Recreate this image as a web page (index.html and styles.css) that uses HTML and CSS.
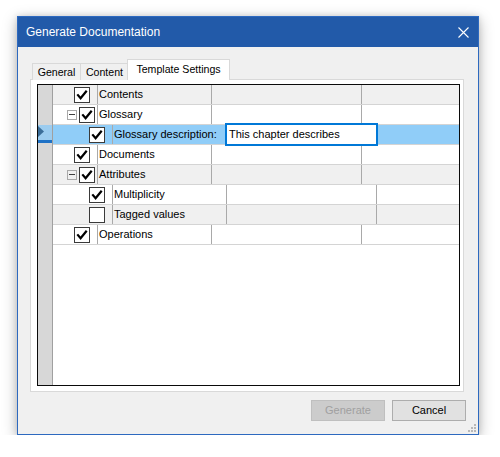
FILE: index.html
```html
<!DOCTYPE html>
<html>
<head>
<meta charset="utf-8">
<title>Generate Documentation</title>
<link rel="stylesheet" href="styles.css">
</head>
<body>
<div class="window">
  <div class="titlebar">
    <span class="title">Generate Documentation</span>
    <svg class="close" width="11" height="11" viewBox="0 0 11 11"><path d="M0.5 0.5L10.5 10.5M10.5 0.5L0.5 10.5" stroke="#ffffff" stroke-width="1.1" fill="none"/></svg>
  </div>
  <div class="content">
    <div class="tabs">
      <div class="tab">General</div>
      <div class="tab second">Content</div>
      <div class="tab active">Template Settings</div>
    </div>
    <div class="panel">
      <div class="grid">
        <div class="row grey">
          <div class="rh"></div>
          <div class="cells">
            <div class="lead l1"><span class="cb c-plain"><svg viewBox="0 0 14 14"><path d="M3 7.2L5.6 10.2L11 3.6" /></svg></span></div>
            <div class="name">Contents</div>
            <div class="val"></div>
            <div class="rest"></div>
          </div>
        </div>
        <div class="row">
          <div class="rh"></div>
          <div class="cells">
            <div class="lead l1"><span class="exp"><span class="minus"></span></span><span class="cb c-exp"><svg viewBox="0 0 14 14"><path d="M3 7.2L5.6 10.2L11 3.6" /></svg></span></div>
            <div class="name">Glossary</div>
            <div class="val"></div>
            <div class="rest"></div>
          </div>
        </div>
        <div class="row selected">
          <div class="rh sel"><svg width="7" height="11" viewBox="0 0 7 11"><polygon points="0,0 6,5.5 0,11" fill="#3b6d98"/></svg></div>
          <div class="cells">
            <div class="lead l2"><span class="cb c-l2"><svg viewBox="0 0 14 14"><path d="M3 7.2L5.6 10.2L11 3.6" /></svg></span></div>
            <div class="name">Glossary description:</div>
            <div class="val"><div class="editor">This chapter describes</div></div>
            <div class="rest"></div>
          </div>
        </div>
        <div class="row">
          <div class="rh"></div>
          <div class="cells">
            <div class="lead l1"><span class="cb c-plain"><svg viewBox="0 0 14 14"><path d="M3 7.2L5.6 10.2L11 3.6" /></svg></span></div>
            <div class="name">Documents</div>
            <div class="val"></div>
            <div class="rest"></div>
          </div>
        </div>
        <div class="row grey">
          <div class="rh"></div>
          <div class="cells">
            <div class="lead l1"><span class="exp"><span class="minus"></span></span><span class="cb c-exp"><svg viewBox="0 0 14 14"><path d="M3 7.2L5.6 10.2L11 3.6" /></svg></span></div>
            <div class="name">Attributes</div>
            <div class="val"></div>
            <div class="rest"></div>
          </div>
        </div>
        <div class="row">
          <div class="rh"></div>
          <div class="cells">
            <div class="lead l2"><span class="cb c-l2"><svg viewBox="0 0 14 14"><path d="M3 7.2L5.6 10.2L11 3.6" /></svg></span></div>
            <div class="name">Multiplicity</div>
            <div class="val"></div>
            <div class="rest"></div>
          </div>
        </div>
        <div class="row grey">
          <div class="rh"></div>
          <div class="cells">
            <div class="lead l2"><span class="cb c-l2"></span></div>
            <div class="name">Tagged values</div>
            <div class="val"></div>
            <div class="rest"></div>
          </div>
        </div>
        <div class="row">
          <div class="rh"></div>
          <div class="cells">
            <div class="lead l1"><span class="cb c-plain"><svg viewBox="0 0 14 14"><path d="M3 7.2L5.6 10.2L11 3.6" /></svg></span></div>
            <div class="name">Operations</div>
            <div class="val"></div>
            <div class="rest"></div>
          </div>
        </div>
        <div class="filler">
          <div class="rh"></div>
          <div class="blank"></div>
        </div>
      </div>
    </div>
    <div class="buttons">
      <div class="btn disabled">Generate</div>
      <div class="btn">Cancel</div>
    </div>
  </div>
  <svg class="grip" width="8" height="8" viewBox="0 0 8 8">
    <rect x="6" y="0" width="2" height="2"/>
    <rect x="3" y="3" width="2" height="2"/>
    <rect x="6" y="3" width="2" height="2"/>
    <rect x="0" y="6" width="2" height="2"/>
    <rect x="3" y="6" width="2" height="2"/>
    <rect x="6" y="6" width="2" height="2"/>
  </svg>
</div>
</body>
</html>
```
FILE: styles.css
```css
* { box-sizing: border-box; }
html, body { margin: 0; padding: 0; background: #ffffff; }
body {
  font-family: "Liberation Sans", Arial, sans-serif;
  font-size: 11px;
  color: #000;
  overflow: hidden;
}
.window {
  position: relative;
  margin: 16px 0 0 17px;
  width: 462px;
  height: 419px;
  background: #f0f0f0;
  border: 1px solid #2d69bf;
  box-shadow: 0 4px 14px rgba(0,0,0,0.28), 0 0 6px rgba(0,0,0,0.12);
  display: flex;
  flex-direction: column;
}
.titlebar {
  height: 30px;
  background: #225aa9;
  display: flex;
  align-items: center;
  justify-content: space-between;
  padding: 0 9px 0 8px;
  flex: none;
}
.title {
  color: #ffffff;
  font-size: 12px;
  line-height: 14px;
  margin-top: 0;
}
.close { display: block; margin-top: 0; }
.content {
  flex: 1;
  display: flex;
  flex-direction: column;
  padding: 12px 14px 0 12px;
}
.tabs {
  display: flex;
  align-items: flex-end;
  height: 21px;
  margin-bottom: -1px;
  position: relative;
  z-index: 1;
  padding-left: 2px;
}
.tab {
  height: 17px;
  width: 49px;
  border: 1px solid #d9d9d9;
  border-bottom: none;
  background: #f0f0f0;
  font-size: 10.6px;
  line-height: 16px;
  text-align: center;
  color: #000;
}
.tab.second { margin-left: -1px; }
.tab.active {
  height: 21px;
  width: 103px;
  margin-left: -2px;
  background: #ffffff;
  line-height: 16px;
  padding-top: 1px;
}
.panel {
  height: 313px;
  width: 434px;
  background: #ffffff;
  border: 1px solid #d9d9d9;
  padding: 4px 3px 5px 6px;
  flex: none;
}
.grid {
  height: 100%;
  border: 1px solid #0a0a0a;
  display: flex;
  flex-direction: column;
  background: #ffffff;
}
.row {
  display: flex;
  height: 20px;
  flex: none;
}
.rh {
  width: 15px;
  flex: none;
  background: #d7d7d7;
  border-right: 1px solid #a0a0a0;
}
.rh.sel {
  background: #9cccef;
  box-shadow: inset 0 -2px 0 #d7d7d7, inset 0 -5px 0 #1f72c6;
  padding-top: 1px;
}
.rh.sel svg { display: block; }
.cells {
  flex: 1;
  display: flex;
  border-bottom: 1px solid #d4d4d4;
  background: #ffffff;
}
.row.grey .cells { background: #f0f0f0; }
.row.selected .cells { background: #90cdf8; }
.lead {
  flex: none;
  display: flex;
  align-items: center;
}
.lead.l1 { width: 44px; }
.lead.l2 { width: 59px; }
.cb {
  width: 16px;
  height: 16px;
  border: 1px solid #3a3a3a;
  background: #ffffff;
  display: block;
  flex: none;
}
.cb svg {
  display: block;
  width: 14px;
  height: 14px;
}
.cb path {
  fill: none;
  stroke: #000;
  stroke-width: 2.2;
  stroke-linecap: square;
  stroke-linejoin: miter;
}
.c-plain { margin-left: 21px; }
.c-exp { margin-left: 2px; }
.c-l2 { margin-left: 36px; }
.exp {
  margin-left: 14px;
  width: 10px;
  height: 10px;
  border: 1px solid #a8a8a8;
  display: flex;
  align-items: center;
  justify-content: center;
  flex: none;
}
.minus {
  width: 6px;
  height: 1px;
  background: #404040;
}
.name {
  width: 114px;
  flex: none;
  border-left: 1px solid #a9a9a9;
  padding-left: 1px;
  line-height: 19px;
  white-space: nowrap;
  overflow: hidden;
}
.val {
  width: 150px;
  flex: none;
  border-left: 1px solid #a9a9a9;
  position: relative;
}
.rest {
  flex: 1;
  border-left: 1px solid #a9a9a9;
}
.editor {
  position: absolute;
  left: -2px;
  top: -2px;
  width: 153px;
  height: 23px;
  background: #ffffff;
  border: 2px solid #0078d7;
  padding-left: 2px;
  line-height: 19px;
  white-space: nowrap;
  color: #000;
  z-index: 2;
}
.filler {
  flex: 1;
  display: flex;
}
.blank { flex: 1; background: #ffffff; }
.buttons {
  display: flex;
  justify-content: flex-end;
  gap: 7px;
  margin-top: 8px;
  padding-right: 0;
  margin-right: -2px;
}
.btn {
  width: 74px;
  height: 21px;
  border: 1px solid #adadad;
  background: #e1e1e1;
  text-align: center;
  line-height: 19px;
  font-size: 11px;
  color: #000;
}
.btn.disabled {
  background: #cccccc;
  border-color: #bfbfbf;
  color: #a0a0a0;
}
.grip {
  position: absolute;
  right: 2px;
  bottom: 2px;
  fill: #b8b8b8;
}
```
